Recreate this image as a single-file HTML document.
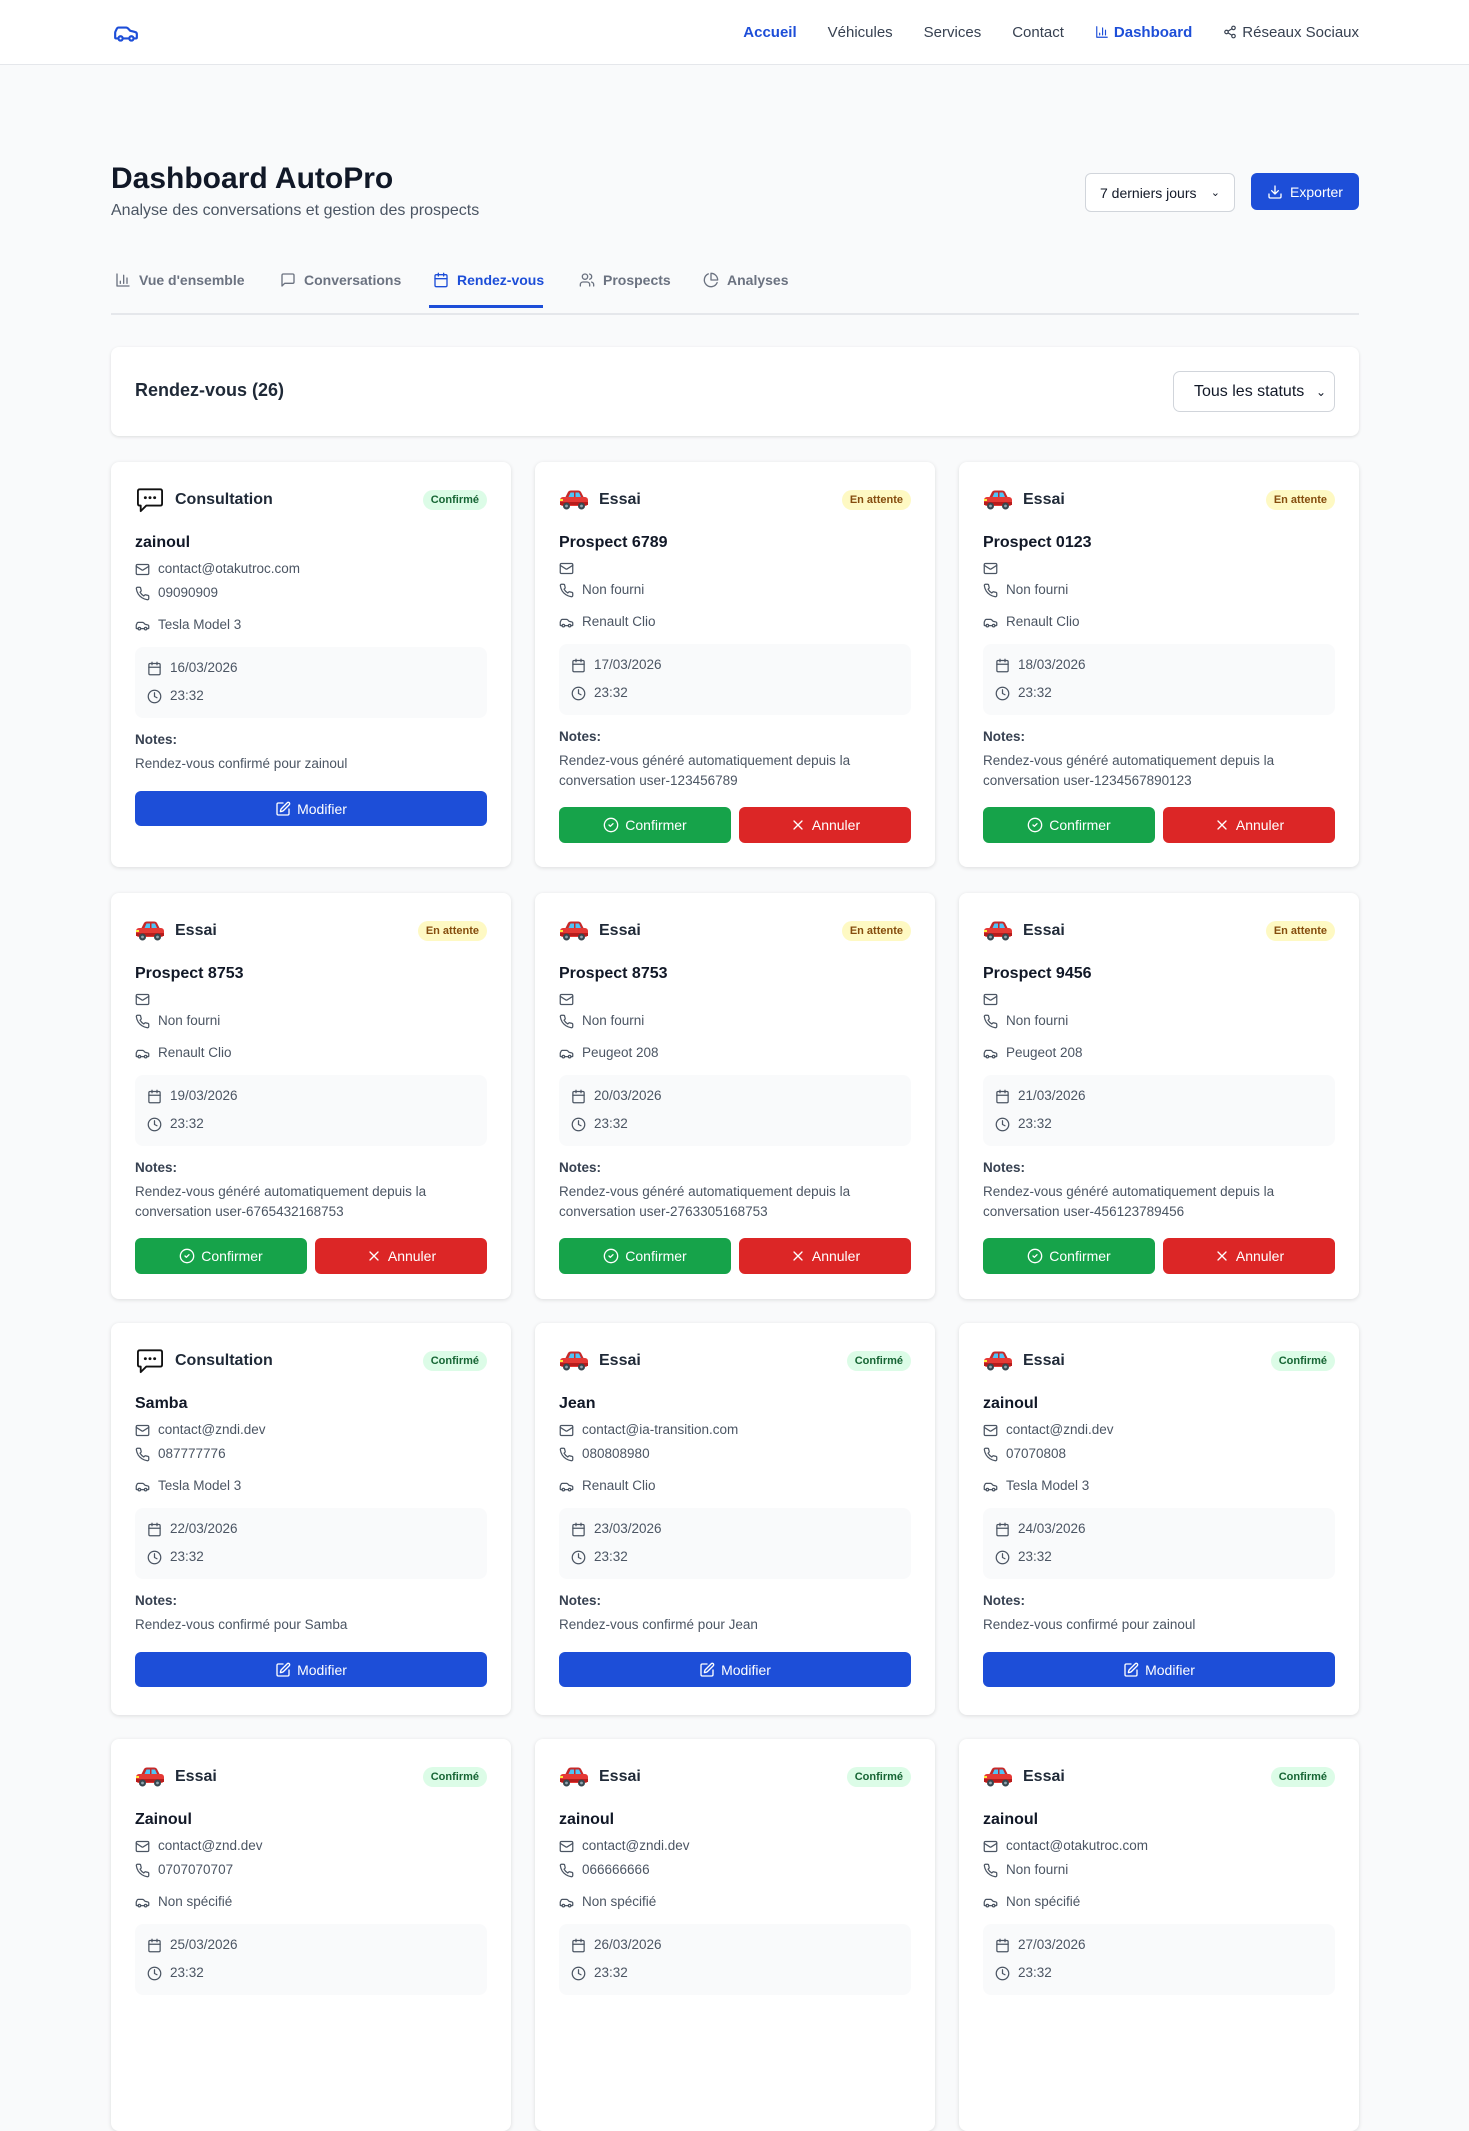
<!DOCTYPE html>
<html><head><meta charset="utf-8">
<style>
*{box-sizing:border-box;margin:0;padding:0}
body{width:1469px;height:2000px;overflow:hidden;background:#f9fafb;font-family:"Liberation Sans",sans-serif;color:#111827}
svg.i{width:16px;height:16px;fill:none;stroke:currentColor;stroke-width:2;stroke-linecap:round;stroke-linejoin:round;flex:none}
.nav{position:absolute;left:0;top:0;width:1469px;height:65px;background:#fff;border-bottom:1px solid #e5e7eb}
.nav .logo{position:absolute;left:111px;top:20px;color:#1d4ed8}
.nav .links{position:absolute;right:110px;top:0;height:64px;display:flex;align-items:center;gap:31px;font-size:15px;color:#374151}
.nav .links span{display:flex;align-items:center;gap:5px}
.nav .act{color:#1d4ed8;font-weight:bold}
.h1{position:absolute;left:111px;top:162px;font-size:30px;font-weight:bold;color:#111827}
.sub{position:absolute;left:111px;top:202px;font-size:16px;color:#4b5563}
.sel{position:absolute;left:1085px;top:173px;width:150px;height:39px;border:1px solid #d1d5db;border-radius:6px;background:#fff;font-size:14px;display:flex;align-items:center;padding:0 14px;justify-content:space-between}
.exp{position:absolute;left:1251px;top:173px;width:108px;height:37px;border-radius:6px;background:#1d4ed8;color:#fff;font-size:14px;display:flex;align-items:center;justify-content:center;gap:7px}
.tabs{position:absolute;left:111px;top:268px;width:1248px;height:47px;border-bottom:2px solid #e5e7eb}
.tab{position:absolute;top:4px;display:flex;align-items:center;gap:8px;font-size:14px;color:#6b7280;font-weight:bold}
.tab.a{color:#1d4ed8}
.ul{position:absolute;left:318px;top:37px;width:114px;height:3px;background:#1d4ed8}
.panel{position:absolute;left:111px;top:347px;width:1248px;height:89px;background:#fff;border-radius:8px;box-shadow:0 1px 3px rgba(0,0,0,.12)}
.panel .t{position:absolute;left:24px;top:33px;font-size:18px;font-weight:bold;color:#1f2937}
.panel .s{position:absolute;right:24px;top:24px;width:162px;height:41px;border:1px solid #d1d5db;border-radius:7px;font-size:16px;display:flex;align-items:center;justify-content:space-between;padding:0 8px 0 20px}
.row{position:absolute;left:111px;width:1248px;display:flex;gap:24px;align-items:stretch}
.card{width:400px;background:#fff;border-radius:8px;box-shadow:0 1px 4px rgba(0,0,0,.12);padding:24px;display:flex;flex-direction:column}
.hd{height:28px;display:flex;align-items:center;font-size:16px;font-weight:bold;color:#1f2937}
.hd .em{width:30px;height:26px;margin-right:10px}
.badge{margin-left:auto;font-size:11px;padding:4px 8px;border-radius:12px;font-weight:bold}
.b-c{background:#dcfce7;color:#166534}
.b-p{background:#fef9c3;color:#854d0e}
.nm{margin-top:18px;font-size:16px;font-weight:bold;line-height:22px;color:#111827}
.ln{display:flex;align-items:center;gap:8px;font-size:13.5px;color:#4b5563;line-height:24px;height:24px}
.ln svg{width:15px;height:15px}
.ln.f{margin-top:3px}
.ln.e{height:20px;margin-top:4px}
.ln.car{margin-top:8px}
.db{margin-top:10px;background:#f9fafb;border-radius:8px;padding:9px 12px 10px}
.db .ln{color:#4b5563}
.db .ln+.ln{margin-top:4px}
.nt{margin-top:12px;font-size:13.5px;line-height:20px;color:#374151;font-weight:bold}
.ntx{margin-top:4px;font-size:13.5px;line-height:20px;color:#4b5563}
.btns{margin-top:16px;display:flex;gap:8px}
.btn{flex:1;height:36px;border-radius:6px;color:#fff;font-size:14px;display:flex;align-items:center;justify-content:center;gap:6px}
.bl{background:#1d4ed8;margin-top:17px;height:35px;flex:none}
.gr{background:#16a34a}.rd{background:#dc2626}
</style></head><body>
<svg width="0" height="0" style="position:absolute">
<defs>
<symbol id="mail" viewBox="0 0 24 24"><rect x="2" y="4" width="20" height="16" rx="2"/><path d="m22 7-8.97 5.7a1.94 1.94 0 0 1-2.06 0L2 7"/></symbol>
<symbol id="phone" viewBox="0 0 24 24"><path d="M22 16.92v3a2 2 0 0 1-2.18 2 19.79 19.790 0 0 1-8.63-3.07 19.5 19.5 0 0 1-6-6 19.79 19.79 0 0 1-3.07-8.67A2 2 0 0 1 4.11 2h3a2 2 0 0 1 2 1.72 12.84 12.84 0 0 0 .7 2.81 2 2 0 0 1-.45 2.11L8.09 9.91a16 16 0 0 0 6 6l1.27-1.27a2 2 0 0 1 2.11-.45 12.84 12.84 0 0 0 2.81.7A2 2 0 0 1 22 16.92z"/></symbol>
<symbol id="car" viewBox="0 0 24 24"><path d="M19 17h2c.6 0 1-.4 1-1v-3c0-.9-.7-1.7-1.5-1.9C18.7 10.6 16 10 16 10s-1.3-1.4-2.2-2.3c-.5-.4-1.1-.7-1.8-.7H5c-.6 0-1.1.4-1.4.9l-1.4 2.9A3.7 3.7 0 0 0 2 12v4c0 .6.4 1 1 1h2"/><circle cx="7" cy="17" r="2"/><path d="M9 17h6"/><circle cx="17" cy="17" r="2"/></symbol>
<symbol id="cal" viewBox="0 0 24 24"><rect x="3" y="4" width="18" height="18" rx="2"/><path d="M16 2v4M8 2v4M3 10h18"/></symbol>
<symbol id="clock" viewBox="0 0 24 24"><circle cx="12" cy="12" r="10"/><path d="M12 6v6l4 2"/></symbol>
<symbol id="edit" viewBox="0 0 24 24"><path d="M12 3H5a2 2 0 0 0-2 2v14a2 2 0 0 0 2 2h14a2 2 0 0 0 2-2v-7"/><path d="M18.4 2.6a1 1 0 0 1 3 3l-9 9a2 2 0 0 1-.85.5l-2.87.84a.5.5 0 0 1-.62-.62l.84-2.870a2 2 0 0 1 .5-.85z"/></symbol>
<symbol id="chk" viewBox="0 0 24 24"><circle cx="12" cy="12" r="10"/><path d="m9 12 2 2 4-4"/></symbol>
<symbol id="x" viewBox="0 0 24 24"><path d="M18 6 6 18M6 6l12 12"/></symbol>
<symbol id="emcar" viewBox="0 0 30 22"><path d="M6 9 L9 3 Q10 1.5 12 1.5 H19 Q21 1.5 22 3 L25 9 Z" fill="#c62828"/><rect x="1" y="8" width="28" height="9" rx="3" fill="#e53935"/><path d="M9.5 8 L11.5 3.5 H15 V8 Z M16.5 8 V3.5 H20 L22 8 Z" fill="#4fc3f7"/><rect x="1" y="13" width="28" height="3" fill="#b71c1c"/><circle cx="7.5" cy="17" r="3.5" fill="#37474f"/><circle cx="22.5" cy="17" r="3.5" fill="#37474f"/><circle cx="7.5" cy="17" r="1.4" fill="#90a4ae"/><circle cx="22.5" cy="17" r="1.4" fill="#90a4ae"/><rect x="1" y="10" width="3" height="2" fill="#ffeb3b"/></symbol>
<symbol id="bub" viewBox="0 0 30 28"><path d="M4 2.5 H26 Q28 2.5 28 4.5 V18 Q28 20 26 20 H11 L5 26 V20 H4 Q2 20 2 18 V4.5 Q2 2.5 4 2.5 Z" fill="#fff" stroke="#111" stroke-width="2" stroke-linejoin="round"/><circle cx="10" cy="11.5" r="1.6" fill="#111"/><circle cx="15" cy="11.5" r="1.6" fill="#111"/><circle cx="20" cy="11.5" r="1.6" fill="#111"/></symbol>
</defs></svg>

<div class="nav">
 <svg class="i logo" style="width:30px;height:26px" viewBox="0 0 24 24"><use href="#car"/></svg>
 <div class="links">
  <span class="act">Accueil</span><span>Véhicules</span><span>Services</span><span>Contact</span>
  <span class="act"><svg class="i" style="width:14px;height:14px" viewBox="0 0 24 24"><path d="M3 3v18h18M18 17V9M13 17V5M8 17v-3"/></svg>Dashboard</span>
  <span><svg class="i" style="width:14px;height:14px" viewBox="0 0 24 24"><circle cx="18" cy="5" r="3"/><circle cx="6" cy="12" r="3"/><circle cx="18" cy="19" r="3"/><path d="m8.6 13.5 6.8 4M15.4 6.5l-6.8 4"/></svg>Réseaux Sociaux</span>
 </div>
</div>

<div class="h1">Dashboard AutoPro</div>
<div class="sub">Analyse des conversations et gestion des prospects</div>
<div class="sel"><span>7 derniers jours</span><span style="font-size:11px">&#x2304;</span></div>
<div class="exp"><svg class="i" viewBox="0 0 24 24"><path d="M21 15v4a2 2 0 0 1-2 2H5a2 2 0 0 1-2-2v-4M7 10l5 5 5-5M12 15V3"/></svg>Exporter</div>

<div class="tabs">
 <div class="tab" style="left:4px"><svg class="i" viewBox="0 0 24 24"><path d="M3 3v18h18M18 17V9M13 17V5M8 17v-3"/></svg>Vue d'ensemble</div>
 <div class="tab" style="left:169px"><svg class="i" viewBox="0 0 24 24"><path d="M21 15a2 2 0 0 1-2 2H7l-4 4V5a2 2 0 0 1 2-2h14a2 2 0 0 1 2 2z"/></svg>Conversations</div>
 <div class="tab a" style="left:322px"><svg class="i" viewBox="0 0 24 24"><use href="#cal"/></svg>Rendez-vous</div>
 <div class="tab" style="left:468px"><svg class="i" viewBox="0 0 24 24"><path d="M16 21v-2a4 4 0 0 0-4-4H6a4 4 0 0 0-4 4v2M22 21v-2a4 4 0 0 0-3-3.87M16 3.13a4 4 0 0 1 0 7.75"/><circle cx="9" cy="7" r="4"/></svg>Prospects</div>
 <div class="tab" style="left:592px"><svg class="i" viewBox="0 0 24 24"><path d="M21.21 15.89A10 10 0 1 1 8 2.83M22 12A10 10 0 0 0 12 2v10z"/></svg>Analyses</div>
 <div class="ul"></div>
</div>

<div class="panel"><div class="t">Rendez-vous (26)</div><div class="s"><span>Tous les statuts</span><span style="font-size:12px">&#x2304;</span></div></div>

<!-- ROW 1 -->
<div class="row" style="top:462px;height:405px">
 <div class="card">
  <div class="hd"><svg class="em" viewBox="0 0 30 28"><use href="#bub"/></svg>Consultation<span class="badge b-c">Confirmé</span></div>
  <div class="nm">zainoul</div>
  <div class="ln f"><svg class="i" viewBox="0 0 24 24"><use href="#mail"/></svg>contact@otakutroc.com</div>
  <div class="ln"><svg class="i" viewBox="0 0 24 24"><use href="#phone"/></svg>09090909</div>
  <div class="ln car"><svg class="i" viewBox="0 0 24 24"><use href="#car"/></svg>Tesla Model 3</div>
  <div class="db"><div class="ln"><svg class="i" viewBox="0 0 24 24"><use href="#cal"/></svg>16/03/2026</div><div class="ln"><svg class="i" viewBox="0 0 24 24"><use href="#clock"/></svg>23:32</div></div>
  <div class="nt">Notes:</div><div class="ntx">Rendez-vous confirmé pour zainoul</div>
  <div class="btn bl"><svg class="i" viewBox="0 0 24 24"><use href="#edit"/></svg>Modifier</div>
 </div>
 <div class="card">
  <div class="hd"><svg class="em" viewBox="0 0 30 22"><use href="#emcar"/></svg>Essai<span class="badge b-p">En attente</span></div>
  <div class="nm">Prospect 6789</div>
  <div class="ln e"><svg class="i" viewBox="0 0 24 24"><use href="#mail"/></svg></div>
  <div class="ln"><svg class="i" viewBox="0 0 24 24"><use href="#phone"/></svg>Non fourni</div>
  <div class="ln car"><svg class="i" viewBox="0 0 24 24"><use href="#car"/></svg>Renault Clio</div>
  <div class="db"><div class="ln"><svg class="i" viewBox="0 0 24 24"><use href="#cal"/></svg>17/03/2026</div><div class="ln"><svg class="i" viewBox="0 0 24 24"><use href="#clock"/></svg>23:32</div></div>
  <div class="nt">Notes:</div><div class="ntx">Rendez-vous généré automatiquement depuis la<br>conversation user-123456789</div>
  <div class="btns"><div class="btn gr"><svg class="i" viewBox="0 0 24 24"><use href="#chk"/></svg>Confirmer</div><div class="btn rd"><svg class="i" viewBox="0 0 24 24"><use href="#x"/></svg>Annuler</div></div>
 </div>
 <div class="card">
  <div class="hd"><svg class="em" viewBox="0 0 30 22"><use href="#emcar"/></svg>Essai<span class="badge b-p">En attente</span></div>
  <div class="nm">Prospect 0123</div>
  <div class="ln e"><svg class="i" viewBox="0 0 24 24"><use href="#mail"/></svg></div>
  <div class="ln"><svg class="i" viewBox="0 0 24 24"><use href="#phone"/></svg>Non fourni</div>
  <div class="ln car"><svg class="i" viewBox="0 0 24 24"><use href="#car"/></svg>Renault Clio</div>
  <div class="db"><div class="ln"><svg class="i" viewBox="0 0 24 24"><use href="#cal"/></svg>18/03/2026</div><div class="ln"><svg class="i" viewBox="0 0 24 24"><use href="#clock"/></svg>23:32</div></div>
  <div class="nt">Notes:</div><div class="ntx">Rendez-vous généré automatiquement depuis la<br>conversation user-1234567890123</div>
  <div class="btns"><div class="btn gr"><svg class="i" viewBox="0 0 24 24"><use href="#chk"/></svg>Confirmer</div><div class="btn rd"><svg class="i" viewBox="0 0 24 24"><use href="#x"/></svg>Annuler</div></div>
 </div>
</div>

<!-- ROW 2 -->
<div class="row" style="top:893px;height:406px">
 <div class="card">
  <div class="hd"><svg class="em" viewBox="0 0 30 22"><use href="#emcar"/></svg>Essai<span class="badge b-p">En attente</span></div>
  <div class="nm">Prospect 8753</div>
  <div class="ln e"><svg class="i" viewBox="0 0 24 24"><use href="#mail"/></svg></div>
  <div class="ln"><svg class="i" viewBox="0 0 24 24"><use href="#phone"/></svg>Non fourni</div>
  <div class="ln car"><svg class="i" viewBox="0 0 24 24"><use href="#car"/></svg>Renault Clio</div>
  <div class="db"><div class="ln"><svg class="i" viewBox="0 0 24 24"><use href="#cal"/></svg>19/03/2026</div><div class="ln"><svg class="i" viewBox="0 0 24 24"><use href="#clock"/></svg>23:32</div></div>
  <div class="nt">Notes:</div><div class="ntx">Rendez-vous généré automatiquement depuis la<br>conversation user-6765432168753</div>
  <div class="btns"><div class="btn gr"><svg class="i" viewBox="0 0 24 24"><use href="#chk"/></svg>Confirmer</div><div class="btn rd"><svg class="i" viewBox="0 0 24 24"><use href="#x"/></svg>Annuler</div></div>
 </div>
 <div class="card">
  <div class="hd"><svg class="em" viewBox="0 0 30 22"><use href="#emcar"/></svg>Essai<span class="badge b-p">En attente</span></div>
  <div class="nm">Prospect 8753</div>
  <div class="ln e"><svg class="i" viewBox="0 0 24 24"><use href="#mail"/></svg></div>
  <div class="ln"><svg class="i" viewBox="0 0 24 24"><use href="#phone"/></svg>Non fourni</div>
  <div class="ln car"><svg class="i" viewBox="0 0 24 24"><use href="#car"/></svg>Peugeot 208</div>
  <div class="db"><div class="ln"><svg class="i" viewBox="0 0 24 24"><use href="#cal"/></svg>20/03/2026</div><div class="ln"><svg class="i" viewBox="0 0 24 24"><use href="#clock"/></svg>23:32</div></div>
  <div class="nt">Notes:</div><div class="ntx">Rendez-vous généré automatiquement depuis la<br>conversation user-2763305168753</div>
  <div class="btns"><div class="btn gr"><svg class="i" viewBox="0 0 24 24"><use href="#chk"/></svg>Confirmer</div><div class="btn rd"><svg class="i" viewBox="0 0 24 24"><use href="#x"/></svg>Annuler</div></div>
 </div>
 <div class="card">
  <div class="hd"><svg class="em" viewBox="0 0 30 22"><use href="#emcar"/></svg>Essai<span class="badge b-p">En attente</span></div>
  <div class="nm">Prospect 9456</div>
  <div class="ln e"><svg class="i" viewBox="0 0 24 24"><use href="#mail"/></svg></div>
  <div class="ln"><svg class="i" viewBox="0 0 24 24"><use href="#phone"/></svg>Non fourni</div>
  <div class="ln car"><svg class="i" viewBox="0 0 24 24"><use href="#car"/></svg>Peugeot 208</div>
  <div class="db"><div class="ln"><svg class="i" viewBox="0 0 24 24"><use href="#cal"/></svg>21/03/2026</div><div class="ln"><svg class="i" viewBox="0 0 24 24"><use href="#clock"/></svg>23:32</div></div>
  <div class="nt">Notes:</div><div class="ntx">Rendez-vous généré automatiquement depuis la<br>conversation user-456123789456</div>
  <div class="btns"><div class="btn gr"><svg class="i" viewBox="0 0 24 24"><use href="#chk"/></svg>Confirmer</div><div class="btn rd"><svg class="i" viewBox="0 0 24 24"><use href="#x"/></svg>Annuler</div></div>
 </div>
</div>

<!-- ROW 3 -->
<div class="row" style="top:1323px;height:392px">
 <div class="card">
  <div class="hd"><svg class="em" viewBox="0 0 30 28"><use href="#bub"/></svg>Consultation<span class="badge b-c">Confirmé</span></div>
  <div class="nm">Samba</div>
  <div class="ln f"><svg class="i" viewBox="0 0 24 24"><use href="#mail"/></svg>contact@zndi.dev</div>
  <div class="ln"><svg class="i" viewBox="0 0 24 24"><use href="#phone"/></svg>087777776</div>
  <div class="ln car"><svg class="i" viewBox="0 0 24 24"><use href="#car"/></svg>Tesla Model 3</div>
  <div class="db"><div class="ln"><svg class="i" viewBox="0 0 24 24"><use href="#cal"/></svg>22/03/2026</div><div class="ln"><svg class="i" viewBox="0 0 24 24"><use href="#clock"/></svg>23:32</div></div>
  <div class="nt">Notes:</div><div class="ntx">Rendez-vous confirmé pour Samba</div>
  <div class="btn bl"><svg class="i" viewBox="0 0 24 24"><use href="#edit"/></svg>Modifier</div>
 </div>
 <div class="card">
  <div class="hd"><svg class="em" viewBox="0 0 30 22"><use href="#emcar"/></svg>Essai<span class="badge b-c">Confirmé</span></div>
  <div class="nm">Jean</div>
  <div class="ln f"><svg class="i" viewBox="0 0 24 24"><use href="#mail"/></svg>contact@ia-transition.com</div>
  <div class="ln"><svg class="i" viewBox="0 0 24 24"><use href="#phone"/></svg>080808980</div>
  <div class="ln car"><svg class="i" viewBox="0 0 24 24"><use href="#car"/></svg>Renault Clio</div>
  <div class="db"><div class="ln"><svg class="i" viewBox="0 0 24 24"><use href="#cal"/></svg>23/03/2026</div><div class="ln"><svg class="i" viewBox="0 0 24 24"><use href="#clock"/></svg>23:32</div></div>
  <div class="nt">Notes:</div><div class="ntx">Rendez-vous confirmé pour Jean</div>
  <div class="btn bl"><svg class="i" viewBox="0 0 24 24"><use href="#edit"/></svg>Modifier</div>
 </div>
 <div class="card">
  <div class="hd"><svg class="em" viewBox="0 0 30 22"><use href="#emcar"/></svg>Essai<span class="badge b-c">Confirmé</span></div>
  <div class="nm">zainoul</div>
  <div class="ln f"><svg class="i" viewBox="0 0 24 24"><use href="#mail"/></svg>contact@zndi.dev</div>
  <div class="ln"><svg class="i" viewBox="0 0 24 24"><use href="#phone"/></svg>07070808</div>
  <div class="ln car"><svg class="i" viewBox="0 0 24 24"><use href="#car"/></svg>Tesla Model 3</div>
  <div class="db"><div class="ln"><svg class="i" viewBox="0 0 24 24"><use href="#cal"/></svg>24/03/2026</div><div class="ln"><svg class="i" viewBox="0 0 24 24"><use href="#clock"/></svg>23:32</div></div>
  <div class="nt">Notes:</div><div class="ntx">Rendez-vous confirmé pour zainoul</div>
  <div class="btn bl"><svg class="i" viewBox="0 0 24 24"><use href="#edit"/></svg>Modifier</div>
 </div>
</div>

<!-- ROW 4 -->
<div class="row" style="top:1739px;height:392px">
 <div class="card">
  <div class="hd"><svg class="em" viewBox="0 0 30 22"><use href="#emcar"/></svg>Essai<span class="badge b-c">Confirmé</span></div>
  <div class="nm">Zainoul</div>
  <div class="ln f"><svg class="i" viewBox="0 0 24 24"><use href="#mail"/></svg>contact@znd.dev</div>
  <div class="ln"><svg class="i" viewBox="0 0 24 24"><use href="#phone"/></svg>0707070707</div>
  <div class="ln car"><svg class="i" viewBox="0 0 24 24"><use href="#car"/></svg>Non spécifié</div>
  <div class="db"><div class="ln"><svg class="i" viewBox="0 0 24 24"><use href="#cal"/></svg>25/03/2026</div><div class="ln"><svg class="i" viewBox="0 0 24 24"><use href="#clock"/></svg>23:32</div></div>
 </div>
 <div class="card">
  <div class="hd"><svg class="em" viewBox="0 0 30 22"><use href="#emcar"/></svg>Essai<span class="badge b-c">Confirmé</span></div>
  <div class="nm">zainoul</div>
  <div class="ln f"><svg class="i" viewBox="0 0 24 24"><use href="#mail"/></svg>contact@zndi.dev</div>
  <div class="ln"><svg class="i" viewBox="0 0 24 24"><use href="#phone"/></svg>066666666</div>
  <div class="ln car"><svg class="i" viewBox="0 0 24 24"><use href="#car"/></svg>Non spécifié</div>
  <div class="db"><div class="ln"><svg class="i" viewBox="0 0 24 24"><use href="#cal"/></svg>26/03/2026</div><div class="ln"><svg class="i" viewBox="0 0 24 24"><use href="#clock"/></svg>23:32</div></div>
 </div>
 <div class="card">
  <div class="hd"><svg class="em" viewBox="0 0 30 22"><use href="#emcar"/></svg>Essai<span class="badge b-c">Confirmé</span></div>
  <div class="nm">zainoul</div>
  <div class="ln f"><svg class="i" viewBox="0 0 24 24"><use href="#mail"/></svg>contact@otakutroc.com</div>
  <div class="ln"><svg class="i" viewBox="0 0 24 24"><use href="#phone"/></svg>Non fourni</div>
  <div class="ln car"><svg class="i" viewBox="0 0 24 24"><use href="#car"/></svg>Non spécifié</div>
  <div class="db"><div class="ln"><svg class="i" viewBox="0 0 24 24"><use href="#cal"/></svg>27/03/2026</div><div class="ln"><svg class="i" viewBox="0 0 24 24"><use href="#clock"/></svg>23:32</div></div>
 </div>
</div>
</body></html>
